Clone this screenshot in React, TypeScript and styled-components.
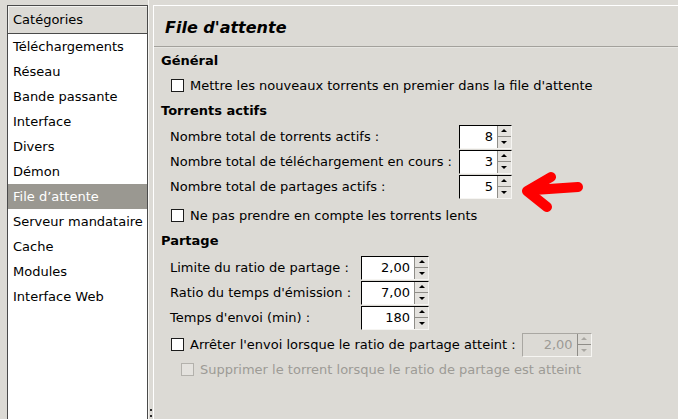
import React from 'react';
import styled, { createGlobalStyle } from 'styled-components';

const Global = createGlobalStyle`
  html, body { margin: 0; padding: 0; background: #dcdad5; }
  body { font-family: "DejaVu Sans", "Noto Sans", sans-serif; font-size: 13px; color: #000; }
  * { box-sizing: border-box; }
`;

const Window = styled.div`
  position: relative;
  width: 678px;
  height: 419px;
  overflow: hidden;
  background: #dcdad5;
  display: flex;
  align-items: stretch;
`;

const Sidebar = styled.div`
  flex-shrink: 0;
  width: 141px;
  margin: 5px 0 0 7px;
  border: 1px solid #4a4a4a;
  border-bottom: none;
  background: #fff;
  display: flex;
  flex-direction: column;
`;

const SidebarHeader = styled.div`
  height: 28px;
  line-height: 27px;
  padding-left: 5px;
  background: #dcdad5;
  border-bottom: 1px solid #4a4a4a;
  box-shadow: inset 1px 1px 0 #f4f3f0;
`;

const TreeItem = styled.div<{ $selected?: boolean }>`
  height: 25px;
  line-height: 25px;
  padding-left: 5px;
  white-space: nowrap;
  background: ${p => (p.$selected ? '#9a9891' : 'transparent')};
  color: ${p => (p.$selected ? '#fff' : '#000')};
`;

const Gutter = styled.div`
  flex-shrink: 0;
  width: 5px;
  border-left: 1px solid #f7f6f3;
  position: relative;
`;

const Grip = styled.div`
  position: absolute;
  left: 1px;
  bottom: 2px;
  width: 2px;
  height: 8px;
  border-top: 2px solid #2a2a2a;
  border-bottom: 2px solid #2a2a2a;
`;

const Panel = styled.div`
  flex: 1;
  margin-top: 5px;
  border-top: 1px solid #fff;
  border-left: 1px solid #fff;
  display: flex;
  flex-direction: column;
`;

const Title = styled.div`
  height: 40px;
  display: flex;
  align-items: center;
  padding: 2px 0 0 11px;
  font-size: 16px;
  font-weight: bold;
  font-style: italic;
`;

const Separator = styled.div`
  height: 2px;
  border-top: 1px solid #a3a19c;
  border-bottom: 1px solid #e6e5e1;
`;

const Content = styled.div`
  padding: 0 0 0 7px;
  display: flex;
  flex-direction: column;
`;

const SectionTitle = styled.div`
  height: 25px;
  line-height: 25px;
  font-weight: bold;
`;

const CheckRow = styled.div<{ $indent?: number; $mt?: number; $disabled?: boolean }>`
  height: 25px;
  display: flex;
  align-items: center;
  gap: 6px;
  padding-left: ${p => p.$indent ?? 10}px;
  margin-top: ${p => p.$mt ?? 0}px;
  color: ${p => (p.$disabled ? '#9d9b96' : '#000')};
  white-space: nowrap;
`;

const Box = styled.span<{ $disabled?: boolean }>`
  display: inline-block;
  width: 13px;
  height: 13px;
  flex-shrink: 0;
  border: 1px solid ${p => (p.$disabled ? '#b3b1ac' : '#1c1c1c')};
  background: ${p => (p.$disabled ? '#e4e2de' : '#fff')};
`;

const SpinGrid = styled.div<{ $mt?: number; $gap?: number }>`
  display: grid;
  grid-template-columns: max-content max-content;
  grid-auto-rows: 25px;
  column-gap: ${p => p.$gap ?? 10}px;
  align-items: center;
  padding-left: 9px;
  margin-top: ${p => p.$mt ?? 0}px;
  white-space: nowrap;
`;

const SpinBox = styled.div<{ $w: number; $disabled?: boolean }>`
  display: flex;
  width: ${p => p.$w}px;
  height: 24px;
  border-top: 1px solid ${p => (p.$disabled ? '#a9a7a2' : '#000')};
  border-left: 1px solid ${p => (p.$disabled ? '#a9a7a2' : '#000')};
  border-bottom: 1px solid #f6f5f2;
  border-right: 1px solid #f6f5f2;
`;

const SpinValue = styled.div<{ $disabled?: boolean }>`
  flex: 1;
  text-align: right;
  padding-right: 4px;
  line-height: 22px;
  background: ${p => (p.$disabled ? '#dcdad5' : '#fff')};
  color: ${p => (p.$disabled ? '#9d9b96' : '#000')};
`;

const SpinButtons = styled.div<{ $disabled?: boolean }>`
  width: 14px;
  display: flex;
  flex-direction: column;
  border-left: 1px solid #8f8d88;
  background: ${p => (p.$disabled ? '#dcdad5' : '#e4e2de')};
`;

const SpinBtn = styled.div<{ $down?: boolean; $disabled?: boolean }>`
  flex: 1;
  display: flex;
  align-items: center;
  justify-content: center;
  border-top: ${p => (p.$down ? '1px solid #8f8d88' : 'none')};
  &::after {
    content: '';
    width: 0;
    height: 0;
    border-left: 3px solid transparent;
    border-right: 3px solid transparent;
    ${p =>
      p.$down
        ? `border-top: 3px solid ${p.$disabled ? '#a9a7a2' : '#000'};`
        : `border-bottom: 3px solid ${p.$disabled ? '#a9a7a2' : '#000'};`}
  }
`;

const Arrow = styled.svg`
  position: absolute;
  left: 520px;
  top: 170px;
`;

function Spin({ value, w, disabled }: { value: string; w: number; disabled?: boolean }) {
  return (
    <SpinBox $w={w} $disabled={disabled}>
      <SpinValue $disabled={disabled}>{value}</SpinValue>
      <SpinButtons $disabled={disabled}>
        <SpinBtn $disabled={disabled} />
        <SpinBtn $down $disabled={disabled} />
      </SpinButtons>
    </SpinBox>
  );
}

const categories = [
  'Téléchargements',
  'Réseau',
  'Bande passante',
  'Interface',
  'Divers',
  'Démon',
  'File d’attente',
  'Serveur mandataire',
  'Cache',
  'Modules',
  'Interface Web',
];

export default function App() {
  return (
    <>
      <Global />
      <Window>
        <Sidebar>
          <SidebarHeader>Catégories</SidebarHeader>
          {categories.map(c => (
            <TreeItem key={c} $selected={c === 'File d’attente'}>
              {c}
            </TreeItem>
          ))}
        </Sidebar>
        <Gutter>
          <Grip />
        </Gutter>
        <Panel>
          <Title>File d'attente</Title>
          <Separator />
          <Content>
            <SectionTitle>Général</SectionTitle>
            <CheckRow>
              <Box />
              Mettre les nouveaux torrents en premier dans la file d'attente
            </CheckRow>
            <SectionTitle>Torrents actifs</SectionTitle>
            <SpinGrid $mt={1} $gap={7}>
              <span>Nombre total de torrents actifs :</span>
              <Spin value="8" w={53} />
              <span>Nombre total de téléchargement en cours :</span>
              <Spin value="3" w={53} />
              <span>Nombre total de partages actifs :</span>
              <Spin value="5" w={53} />
            </SpinGrid>
            <CheckRow $mt={4}>
              <Box />
              Ne pas prendre en compte les torrents lents
            </CheckRow>
            <SectionTitle>Partage</SectionTitle>
            <SpinGrid $mt={2}>
              <span>Limite du ratio de partage :</span>
              <Spin value="2,00" w={68} />
              <span>Ratio du temps d'émission :</span>
              <Spin value="7,00" w={68} />
              <span>Temps d'envoi (min) :</span>
              <Spin value="180" w={68} />
            </SpinGrid>
            <CheckRow $mt={2}>
              <Box />
              Arrêter l'envoi lorsque le ratio de partage atteint :
              <Spin value="2,00" w={70} disabled />
            </CheckRow>
            <CheckRow $indent={20} $disabled>
              <Box $disabled />
              Supprimer le torrent lorsque le ratio de partage est atteint
            </CheckRow>
          </Content>
        </Panel>
        <Arrow width="66" height="44" viewBox="0 0 66 44">
          <g fill="none" stroke="#ff0000" strokeWidth="10" strokeLinecap="round" strokeLinejoin="round">
            <path d="M58 17 L14 20" />
            <path d="M31 7 L7 21 L27 37" />
          </g>
        </Arrow>
      </Window>
    </>
  );
}
